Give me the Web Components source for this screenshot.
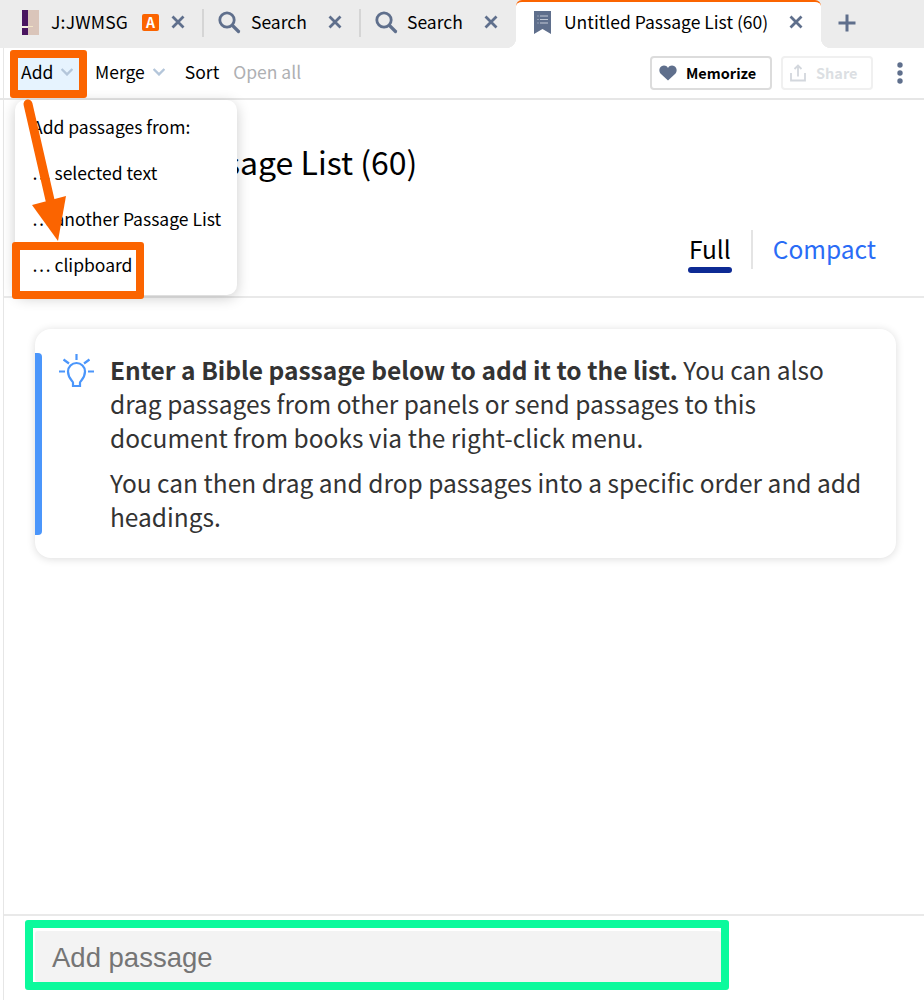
<!DOCTYPE html>
<html>
<head>
<meta charset="utf-8">
<title>Untitled Passage List</title>
<style>
    html, body { margin: 0; padding: 0; background: #fff; }
    body {
        width: 924px;
        height: 1000px;
        overflow: hidden;
        font-family: "Noto Sans CJK SC", "Noto Sans", sans-serif;
        color: #000;
    }
</style>
</head>
<body>
<passage-app></passage-app>
<script>
const ICONS = {
    close: '<svg width="16" height="16" viewBox="0 0 16 16"><path d="M2.500 2.500l11 11M13.500 2.500l-11 11" stroke="#5f6f8c" stroke-width="2.800" fill="none"/></svg>',
    search: '<svg width="24" height="24" viewBox="0 0 24 24"><circle cx="10" cy="10" r="7.200" stroke="#5f6f8c" stroke-width="2.800" fill="none"/><path d="M15.500 15.500l6 6" stroke="#5f6f8c" stroke-width="3.200" stroke-linecap="round" fill="none"/></svg>',
    list: '<svg width="17" height="23" viewBox="0 0 17 23"><path d="M0 0h17v23l-8.500-5L0 23z" fill="#5f6f8c"/><path d="M6 5h8M6 8.500h8M6 12h8M3.500 5h1M3.500 8.500h1M3.500 12h1" stroke="#c3cad6" stroke-width="1.200" fill="none"/></svg>',
    plus: '<svg width="18" height="18" viewBox="0 0 18 18"><path d="M9 0.500v17M0.500 9h17" stroke="#5f6f8c" stroke-width="3" fill="none"/></svg>',
    chevron: '<svg width="12" height="8" viewBox="0 0 12 8"><path d="M0.600 1l5.400 5.400L11.400 1" stroke="#b4c6da" stroke-width="2.400" fill="none"/></svg>',
    heart: '<svg width="18" height="16" viewBox="0 0 18 16"><path d="M9 15.500L2 9C-0.500 6.500 0 2.800 2.500 1.300 4.800 0 7.500 0.500 9 3c1.500-2.500 4.200-3 6.500-1.700C18 2.800 18.500 6.500 16 9z" fill="#5f6f8c"/></svg>',
    share: '<svg width="16" height="18" viewBox="0 0 16 18"><path d="M1 9v7.500h14V9M8 12.500V2M4.500 5L8 1.500 11.500 5" stroke="#d3d7dd" stroke-width="1.800" fill="none"/></svg>',
    kebab: '<svg width="6" height="22" viewBox="0 0 6 22"><circle cx="3" cy="3" r="2.700" fill="#5f6f8c"/><circle cx="3" cy="11" r="2.700" fill="#5f6f8c"/><circle cx="3" cy="19" r="2.700" fill="#5f6f8c"/></svg>',
    bulb: '<svg width="35" height="33" viewBox="0 0 35 33" fill="none" stroke="#4b96fb" stroke-width="2.200"><path d="M14 32h7v-3.500c0-1.500 5-4 5-11a8.500 8.500 0 0 0-17 0c0 7 5 9.500 5 11z"/><path d="M17.500 0v6M0 17.500h6M29 17.500h6M4.500 5.500l5.500 4M30.500 5.500l-5.500 4"/></svg>',
    book: '<svg width="17" height="25" viewBox="0 0 17 25"><rect width="17" height="25" fill="#dac5ba"/><rect width="6" height="25" fill="#4a1560"/><rect y="16" width="6" height="2" fill="#f4eee0"/><rect x="6" y="16" width="5" height="1" fill="#f3e6c8"/></svg>'
};

// One tab of the strip, slot holds its title
class AppTab extends HTMLElement {
    constructor() {
        super();
        this.attachShadow({ mode: 'open' });
    }

    connectedCallback() {
        const icon = ICONS[this.getAttribute('icon')] || '';
        const badge = this.hasAttribute('badge') ? '<span class="badge">A</span>' : '';
        this.shadowRoot.innerHTML = `
            <style>
                :host {
                    display: flex;
                    align-items: center;
                    height: 44px;
                    font-size: 17.5px;
                    line-height: 24px;
                    white-space: nowrap;
                    box-sizing: border-box;
                }
                :host([active]) {
                    position: relative;
                    height: 48px;
                    padding-bottom: 6px;
                    background: #fff;
                    border-top: 2px solid #fb6400;
                    border-radius: 6px 6px 0 0;
                }
                :host([active])::before,
                :host([active])::after {
                    content: "";
                    position: absolute;
                    bottom: 0;
                    width: 10px;
                    height: 10px;
                }
                :host([active])::before {
                    left: -10px;
                    background: radial-gradient(circle at 0 0, #ececec 10px, #fff 10.5px);
                }
                :host([active])::after {
                    right: -10px;
                    background: radial-gradient(circle at 100% 0, #ececec 10px, #fff 10.5px);
                }
                .icon { display: flex; }
                .close { display: flex; }
                .badge {
                    display: block;
                    width: 17px;
                    height: 17px;
                    background: #fb6400;
                    color: #fff;
                    border-radius: 2px;
                    font-size: 14px;
                    font-weight: 700;
                    line-height: 17px;
                    text-align: center;
                    letter-spacing: 0;
                }
            </style>
            <span class="icon" style="margin-right:${this.getAttribute('icon-gap')}px">${icon}</span>
            <slot></slot>
            ${badge ? `<span style="margin-left:14px;display:flex">${badge}</span>` : ''}
            <span class="close" style="margin-left:${this.getAttribute('close-gap')}px">${ICONS.close}</span>
        `;
    }
}

class TabStrip extends HTMLElement {
    constructor() {
        super();
        this.attachShadow({ mode: 'open' });
    }

    connectedCallback() {
        this.shadowRoot.innerHTML = `
            <style>
                :host {
                    display: flex;
                    align-items: flex-start;
                    height: 48px;
                    background: #ececec;
                    box-sizing: border-box;
                }
                .divider {
                    width: 2px;
                    height: 28px;
                    margin-top: 9px;
                    background: #d5d5d5;
                }
                .t1 { margin-left: 22px; width: 180px; letter-spacing: .2px; }
                .t2 { margin-left: 13px; width: 142px; }
                .t3 { margin-left: 13px; width: 142px; }
                .active { width: 305px; padding-left: 18px; }
                .plus { display: flex; margin: 14px 0 0 17px; }
            </style>
            <app-tab class="t1" icon="book" icon-gap="12" close-gap="11" badge>J:JWMSG</app-tab>
            <div class="divider"></div>
            <app-tab class="t2" icon="search" icon-gap="10" close-gap="20">Search</app-tab>
            <div class="divider"></div>
            <app-tab class="t3" icon="search" icon-gap="9" close-gap="20">Search</app-tab>
            <app-tab class="active" active icon="list" icon-gap="13" close-gap="20">Untitled Passage List (60)</app-tab>
            <span class="plus">${ICONS.plus}</span>
        `;
    }
}

class ToolBar extends HTMLElement {
    constructor() {
        super();
        this.attachShadow({ mode: 'open' });
    }

    connectedCallback() {
        this.shadowRoot.innerHTML = `
            <style>
                :host {
                    display: flex;
                    align-items: center;
                    height: 52px;
                    padding-left: 18px;
                    border-bottom: 2px solid #e6e6e6;
                    box-sizing: border-box;
                    font-size: 17.5px;
                    line-height: 24px;
                    white-space: nowrap;
                }
                .item { display: flex; align-items: center; height: 32px; margin-top: -2px; }
                .add {
                    width: 61px;
                    margin-top: 2px;
                    padding: 0 0 4px 3px;
                    background: #e6f3fe;
                    box-sizing: border-box;
                    gap: 8px;
                }
                .merge { margin-left: 16px; gap: 8px; }
                .sort { margin-left: 20px; }
                .open { margin-left: 14px; color: #aeb0b3; }
                .right { margin-left: auto; display: flex; align-items: center; }
                .btn {
                    display: flex;
                    align-items: center;
                    height: 34px;
                    border: 2px solid #dcdcdc;
                    border-radius: 4px;
                    box-sizing: border-box;
                    font-size: 14.5px;
                    font-weight: 700;
                }
                .memorize { width: 122px; padding-left: 7px; gap: 9px; }
                .share { width: 92px; margin-left: 9px; padding-left: 7px; gap: 10px; border-color: #f0f0f0; color: #dcdfe3; }
                .kebab { display: flex; margin: 0 21px 0 24px; }
                svg { display: block; }
            </style>
            <div class="item add">Add ${ICONS.chevron}</div>
            <div class="item merge">Merge ${ICONS.chevron}</div>
            <div class="item sort">Sort</div>
            <div class="item open">Open all</div>
            <div class="right">
                <div class="btn memorize">${ICONS.heart}<span>Memorize</span></div>
                <div class="btn share">${ICONS.share}<span>Share</span></div>
                <span class="kebab">${ICONS.kebab}</span>
            </div>
        `;
    }
}

class ListHeader extends HTMLElement {
    constructor() {
        super();
        this.attachShadow({ mode: 'open' });
    }

    connectedCallback() {
        this.shadowRoot.innerHTML = `
            <style>
                :host {
                    display: block;
                    height: 198px;
                    padding: 39px 48px 0 40px;
                    border-bottom: 2px solid #e9e9e9;
                    box-sizing: border-box;
                }
                h1 {
                    margin: 0;
                    font-size: 32px;
                    font-weight: 400;
                    line-height: 44px;
                    white-space: nowrap;
                }
                .views {
                    display: flex;
                    align-items: flex-start;
                    justify-content: flex-end;
                    margin-top: 47px;
                    font-size: 24.5px;
                    line-height: 37px;
                }
                .full { position: relative; }
                .full::after {
                    content: "";
                    position: absolute;
                    left: -1px;
                    right: -1px;
                    top: 37px;
                    height: 6px;
                    border-radius: 3px;
                    background: #0d2a94;
                }
                .sep { width: 2px; height: 39px; margin: 0 20px; background: #e4e4e4; }
                .compact { color: #2a6cf6; }
            </style>
            <h1>Untitled Passage List (60)</h1>
            <div class="views">
                <span class="full">Full</span>
                <span class="sep"></span>
                <span class="compact">Compact</span>
            </div>
        `;
    }
}

class TipCard extends HTMLElement {
    constructor() {
        super();
        this.attachShadow({ mode: 'open' });
    }

    connectedCallback() {
        this.shadowRoot.innerHTML = `
            <style>
                :host {
                    display: flex;
                    position: relative;
                    margin: 31px 28px 0 31px;
                    height: 229px;
                    box-sizing: border-box;
                    padding: 24px 30px 0 24px;
                    background: #fff;
                    border-radius: 16px;
                    box-shadow: 0 1px 8px rgba(0,0,0,.14);
                    color: #333;
                    font-size: 24.5px;
                    line-height: 34px;
                }
                .bar {
                    position: absolute;
                    left: 0;
                    top: 24px;
                    bottom: 23px;
                    width: 7px;
                    background: #4b96fb;
                    border-radius: 0 4px 4px 0;
                }
                .icon { flex: none; width: 51px; height: 34px; padding-top: 1px; box-sizing: border-box; }
                svg { display: block; }
            </style>
            <div class="bar"></div>
            <div class="icon">${ICONS.bulb}</div>
            <div><slot></slot></div>
        `;
    }
}

class PopMenu extends HTMLElement {
    constructor() {
        super();
        this.attachShadow({ mode: 'open' });
    }

    connectedCallback() {
        this.shadowRoot.innerHTML = `
            <style>
                :host {
                    display: block;
                    position: absolute;
                    left: 15px;
                    top: 100px;
                    width: 222px;
                    height: 195px;
                    box-sizing: border-box;
                    padding: 4px 0 0 17px;
                    background: #fff;
                    border-radius: 10px;
                    box-shadow: 0 3px 14px rgba(0,0,0,.2);
                    font-size: 17.5px;
                    line-height: 46px;
                    white-space: nowrap;
                }
                div { height: 46px; }
            </style>
            <div>Add passages from:</div>
            <div>… selected text</div>
            <div>… another Passage List</div>
            <div>… clipboard</div>
        `;
    }
}

class PassageInput extends HTMLElement {
    constructor() {
        super();
        this.attachShadow({ mode: 'open' });
    }

    connectedCallback() {
        this.shadowRoot.innerHTML = `
            <style>
                :host {
                    display: block;
                    margin-top: auto;
                    height: 86px;
                    box-sizing: border-box;
                    padding: 15px 0 0 31px;
                    border-top: 2px solid #e9e9e9;
                }
                .field {
                    width: 686px;
                    height: 51px;
                    box-sizing: border-box;
                    padding-left: 17px;
                    background: #f3f3f3;
                    border-radius: 3px;
                    color: #757575;
                    font: 27.5px/53px "Liberation Sans", Arial, sans-serif;
                }
            </style>
            <div class="field">Add passage</div>
        `;
    }
}

// Orange and green callouts drawn over the screenshot
class CallOuts extends HTMLElement {
    constructor() {
        super();
        this.attachShadow({ mode: 'open' });
    }

    connectedCallback() {
        this.shadowRoot.innerHTML = `
            <style>
                :host { display: block; position: absolute; inset: 0; pointer-events: none; }
                .box { position: absolute; box-sizing: border-box; border-radius: 3px; border: 8px solid #fb6400; }
                .add { left: 10px; top: 50px; width: 77px; height: 48px; }
                .clip { left: 12px; top: 242px; width: 132px; height: 57px; }
                .input { left: 25px; top: 920px; width: 704px; height: 70px; border-color: #0bfa9c; }
                svg { position: absolute; left: 0; top: 0; }
            </style>
            <div class="box add"></div>
            <div class="box clip"></div>
            <div class="box input"></div>
            <svg width="100" height="260" viewBox="0 0 100 260">
                <path d="M28 104L50 200" stroke="#fb6400" stroke-width="9" stroke-linecap="round" fill="none"/>
                <path d="M32 205L66 196L58 241z" fill="#fb6400"/>
            </svg>
        `;
    }
}

class PassageApp extends HTMLElement {
    constructor() {
        super();
        this.attachShadow({ mode: 'open' });
    }

    connectedCallback() {
        this.shadowRoot.innerHTML = `
            <style>
                :host {
                    display: flex;
                    flex-direction: column;
                    position: relative;
                    width: 924px;
                    height: 1000px;
                    overflow: hidden;
                }
                .panel {
                    flex: 1;
                    display: flex;
                    flex-direction: column;
                    border-left: 1px solid #e6e6e6;
                    margin-left: 3px;
                }
                tool-bar { margin-left: -4px; }
                p { margin: 0 0 11px; }
                b { font-weight: 700; }
            </style>
            <tab-strip></tab-strip>
            <div class="panel">
                <tool-bar></tool-bar>
                <list-header></list-header>
                <tip-card>
                    <p><b>Enter a Bible passage below to add it to the list.</b> You can also drag passages from other panels or send passages to this document from books via the right-click menu.</p>
                    <p>You can then drag and drop passages into a specific order and add headings.</p>
                </tip-card>
                <passage-input></passage-input>
            </div>
            <pop-menu></pop-menu>
            <call-outs></call-outs>
        `;
    }
}

customElements.define('app-tab', AppTab);
customElements.define('tab-strip', TabStrip);
customElements.define('tool-bar', ToolBar);
customElements.define('list-header', ListHeader);
customElements.define('tip-card', TipCard);
customElements.define('pop-menu', PopMenu);
customElements.define('passage-input', PassageInput);
customElements.define('call-outs', CallOuts);
customElements.define('passage-app', PassageApp);
</script>
</body>
</html>
